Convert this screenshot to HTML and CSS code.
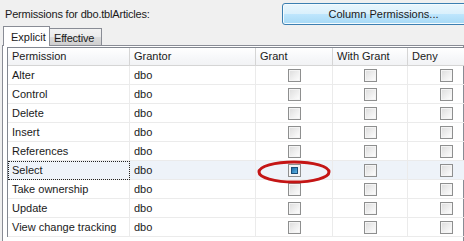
FILE: index.html
```html
<!DOCTYPE html>
<html lang="en">
<head>
  <meta charset="UTF-8">
  <title>Permissions</title>
  <link rel="stylesheet" href="styles.css">
</head>
<body>

  <div class="top">
    <span class="title">Permissions for dbo.tblArticles:</span>
    <button class="colBtn">Column Permissions...</button>
  </div>

  <div class="tabs">
    <div class="tab active">Explicit</div>
    <div class="tab">Effective</div>
  </div>

  <div class="panel">
    <div class="grid">
      <div class="row head">
        <div class="cell">Permission</div>
        <div class="cell">Grantor</div>
        <div class="cell">Grant</div>
        <div class="cell">With Grant</div>
        <div class="cell">Deny</div>
      </div>
      <div id="rows"></div>
    </div>
  </div>

  <svg class="mark" width="80" height="30" viewBox="0 0 80 30">
    <ellipse cx="37" cy="12" rx="35" ry="10" fill="none" stroke="#c41515" stroke-width="3"/>
  </svg>

  <script>
    const perms = ['Alter', 'Control', 'Delete', 'Insert', 'References', 'Select',
                   'Take ownership', 'Update', 'View change tracking'];

    const rows = document.getElementById('rows');
    perms.forEach(name => {
      const sel = name === 'Select';
      const row = document.createElement('div');
      row.className = 'row' + (sel ? ' selected' : '');
      row.innerHTML = `
        <div class="cell${sel ? ' focus' : ''}">${name}</div>
        <div class="cell">dbo</div>
        <div class="cell box"><span class="check${sel ? ' on' : ''}"></span></div>
        <div class="cell box"><span class="check"></span></div>
        <div class="cell box"><span class="check"></span></div>
      `;
      rows.appendChild(row);
    });
  </script>

</body>
</html>
```

FILE: styles.css
```css
body {
  margin: 0;
  background-color: #f0f0f0;
  font-family: "Liberation Sans", Arial, sans-serif;
  font-size: 11px;
  color: #1a1a1a;
  overflow: hidden;
  width: 464px;
  height: 241px;
  position: relative;
}
.top {
  display: flex;
  align-items: flex-start;
  height: 24px;
  padding-top: 3px;
  box-sizing: border-box;
}
.title {
  width: 282px;
  flex-shrink: 0;
  padding-left: 5px;
  margin-top: 5px;
  box-sizing: border-box;
  letter-spacing: -0.2px;
}
.colBtn {
  flex-shrink: 0;
  width: 197px;
  height: 22px;
  border: 1px solid #3c7fb1;
  border-radius: 3px;
  background: linear-gradient(#eaf6fd 0%, #d9f0fc 50%, #bee6fd 51%, #a7d9f5 100%);
  box-shadow: inset 0 0 0 1px #f4fbfe;
  font-family: inherit;
  font-size: 11px;
  color: #1a1a1a;
  padding: 0 0 0 6px;
}
.tabs {
  display: flex;
  align-items: flex-end;
  height: 21px;
  padding-left: 3px;
}
.tab {
  height: 17px;
  width: 52px;
  line-height: 18px;
  padding-left: 4px;
  box-sizing: border-box;
  white-space: nowrap;
  letter-spacing: -0.2px;
  border: 1px solid #898c95;
  border-bottom: none;
  border-left: none;
  background: linear-gradient(#f2f2f2, #ebebeb 50%, #dddddd 51%, #cfcfcf);
}
.tab.active {
  height: 20px;
  line-height: 21px;
  width: 47px;
  padding: 0 0 0 7px;
  letter-spacing: 0;
  border-left: 1px solid #898c95;
  background: #ffffff;
  position: relative;
  z-index: 1;
  margin-bottom: -1px;
}
.panel {
  margin-left: 2px;
  border: 1px solid #898c95;
  background: #ffffff;
  padding: 1px 0 0 4px;
  height: 300px;
}
.grid {
  border-top: 1px solid #828790;
  border-left: 1px solid #828790;
  width: 520px;
}
.row {
  display: grid;
  grid-template-columns: 122px 126px 77px 75px 77px;
  height: 19px;
}
.row.head {
  height: 18px;
  background: linear-gradient(#ffffff, #f7f8fa 50%, #f1f2f4);
}
.cell {
  border-right: 1px solid #ebebeb;
  border-bottom: 1px solid #ebebeb;
  padding-left: 4px;
  line-height: 18px;
  white-space: nowrap;
  overflow: hidden;
}
.head .cell {
  border-right-color: #d5d5d5;
  border-bottom-color: #d5d5d5;
  line-height: 17px;
}
.row.selected {
  background-color: #eef3f9;
}
.cell.focus {
  outline: 1px dotted #222;
  outline-offset: -1px;
}
.cell.box {
  display: flex;
  align-items: center;
  justify-content: center;
  padding: 0;
}
.check {
  width: 11px;
  height: 11px;
  border: 1px solid #8e8f8f;
  background: linear-gradient(135deg, #dcdcdc, #ffffff);
  box-shadow: inset 0 0 0 1px #f4f4f4;
}
.check.on {
  background: #f4f4f4;
  box-shadow: inset 0 0 0 2px #f4f4f4;
  position: relative;
}
.check.on::after {
  content: "";
  position: absolute;
  left: 2px;
  top: 2px;
  width: 5px;
  height: 5px;
  border: 1px solid #1c4f78;
  background: linear-gradient(135deg, #1e6ea8, #5db3e3);
}
.mark {
  position: absolute;
  left: 257px;
  top: 160px;
}
```
